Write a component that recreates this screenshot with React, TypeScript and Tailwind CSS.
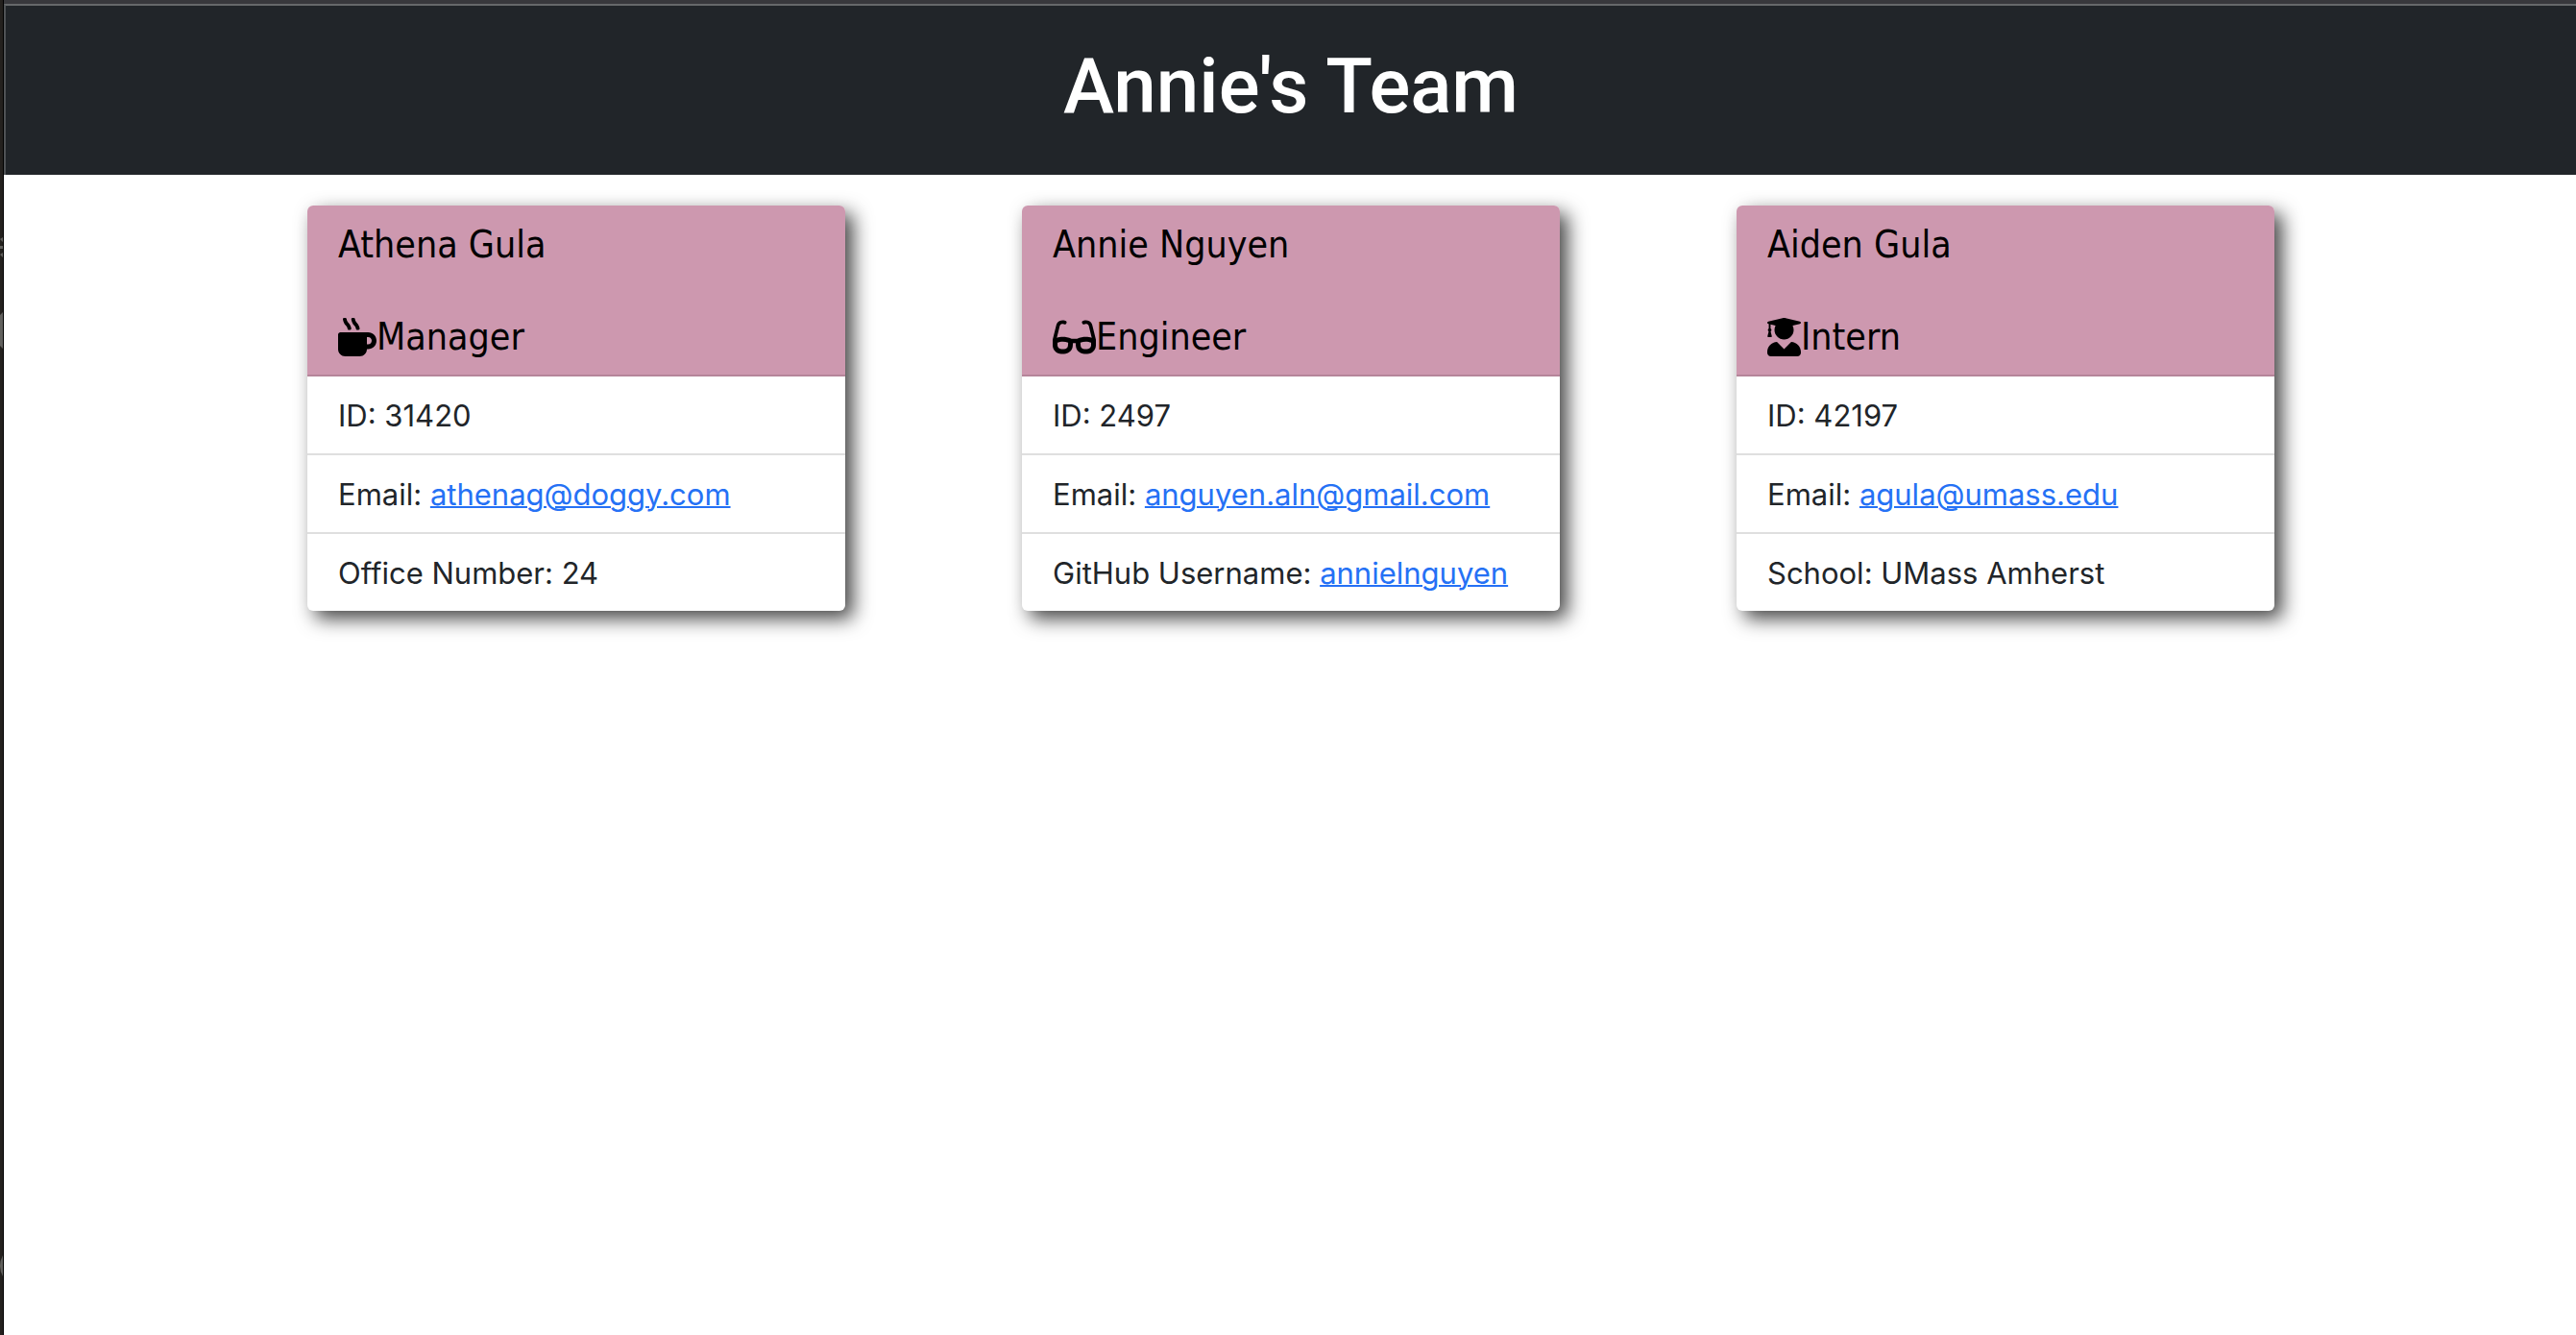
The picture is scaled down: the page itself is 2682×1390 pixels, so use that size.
import type { ReactNode } from "react";
import { FaGlasses, FaMugHot, FaUserGraduate } from "react-icons/fa";

type Detail = { label: string; value: string; href?: string };
type Member = { name: string; role: string; icon: ReactNode; details: Detail[] };

const team: Member[] = [
  {
    name: "Athena Gula",
    role: "Manager",
    icon: <FaMugHot className="h-10 w-10" aria-hidden="true" />,
    details: [
      { label: "ID", value: "31420" },
      { label: "Email", value: "athenag@doggy.com", href: "mailto:athenag@doggy.com" },
      { label: "Office Number", value: "24" },
    ],
  },
  {
    name: "Annie Nguyen",
    role: "Engineer",
    icon: <FaGlasses className="h-10 w-[45px]" aria-hidden="true" />,
    details: [
      { label: "ID", value: "2497" },
      { label: "Email", value: "anguyen.aln@gmail.com", href: "mailto:anguyen.aln@gmail.com" },
      { label: "GitHub Username", value: "annielnguyen", href: "https://github.com/annielnguyen" },
    ],
  },
  {
    name: "Aiden Gula",
    role: "Intern",
    icon: <FaUserGraduate className="h-10 w-[35px]" aria-hidden="true" />,
    details: [
      { label: "ID", value: "42197" },
      { label: "Email", value: "agula@umass.edu", href: "mailto:agula@umass.edu" },
      { label: "School", value: "UMass Amherst" },
    ],
  },
];

function MemberCard({ name, role, icon, details }: Member) {
  return (
    <article className="w-full max-w-[560px] overflow-hidden rounded-md bg-white shadow-[8px_8px_20px_#444]">
      <header className="flex flex-col gap-12 border-b-2 border-[#b5859a] bg-[#cd98af] px-8 pt-[17px] pb-[15px] font-['DejaVu_Sans_Condensed','Noto_Sans',sans-serif] text-[39px] leading-[48px] text-black">
        <h2>{name}</h2>
        <h3 className="flex items-center">
          {icon}
          {role}
        </h3>
      </header>
      <ul className="divide-y-2 divide-[#dfdfdf]">
        {details.map((d) => (
          <li key={d.label} className="px-8 pt-[17px] pb-[15px] text-[31px] leading-[48px]">
            {d.label}:{" "}
            {d.href ? (
              <a href={d.href} className="text-[#2571f5] underline decoration-2">
                {d.value}
              </a>
            ) : (
              d.value
            )}
          </li>
        ))}
      </ul>
    </article>
  );
}

export default function App() {
  return (
    <div className="flex min-h-screen bg-white font-['Inter',sans-serif] text-[#212529]">
      <div className="relative w-1 shrink-0 border-r border-black bg-[#24211e]">
        <svg className="absolute top-0 left-0" width="3" height="1390" viewBox="0 0 3 1390" aria-hidden="true">
          <path d="M0 249l3-2v5zM0 256h3v3H0zM0 265l3-2v5zM0 328l3-3v38l-3-3z" fill="#62615e" />
          <path d="M3 1307q-6 11 0 22z" fill="#62615e" />
        </svg>
      </div>
      <div className="min-w-0 flex-1">
        <div className="h-1 bg-[#38383c]" />
        <header className="border-t-2 border-l-2 border-t-[#66686a] border-l-[#4f5255] bg-[#212529] pt-9 pb-11">
          <h1 className="text-center font-['Roboto',sans-serif] text-[80px] leading-[96px] font-medium text-white">
            Annie's Team
          </h1>
        </header>
        <main className="mx-auto grid max-w-[2234px] grid-cols-3 justify-items-center pt-8 pl-[2px]">
          {team.map((m) => (
            <MemberCard key={m.name} {...m} />
          ))}
        </main>
      </div>
    </div>
  );
}
